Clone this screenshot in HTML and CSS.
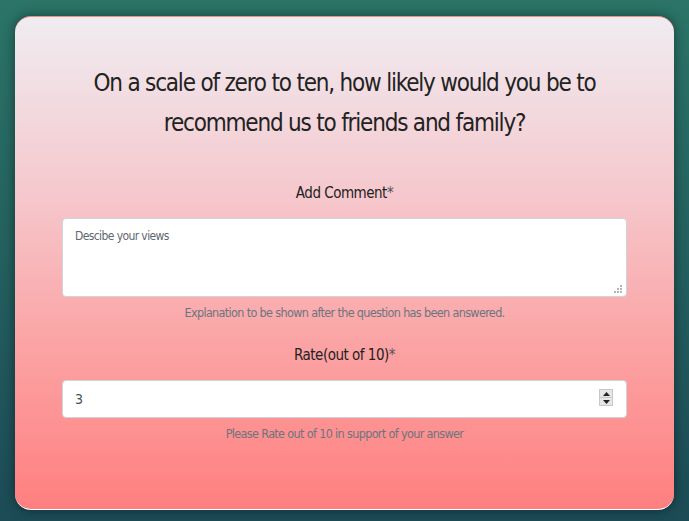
FILE: index.html
```html
<!DOCTYPE html>
<html lang="en">
<head>
<meta charset="utf-8">
<title>Survey</title>
<link rel="stylesheet" href="styles.css">
</head>
<body>
<main class="page">
  <form class="card">
    <h1 class="question">On a scale of zero to ten, how likely would you be to recommend us to friends and family?</h1>
    <div class="field">
      <label class="label" for="comment">Add Comment<span class="req">*</span></label>
      <div class="control">
        <textarea id="comment" class="textarea" placeholder="Descibe your views"></textarea>
        <svg class="grip" width="9" height="9" viewBox="0 0 9 9" aria-hidden="true">
          <rect x="6" y="0" width="2" height="2" fill="#b5b5b5"/>
          <rect x="3" y="3" width="2" height="2" fill="#b5b5b5"/>
          <rect x="6" y="3" width="2" height="2" fill="#b5b5b5"/>
          <rect x="0" y="6" width="2" height="2" fill="#b5b5b5"/>
          <rect x="3" y="6" width="2" height="2" fill="#b5b5b5"/>
          <rect x="6" y="6" width="2" height="2" fill="#b5b5b5"/>
        </svg>
      </div>
      <p class="help">Explanation to be shown after the question has been answered.</p>
    </div>
    <div class="field">
      <label class="label" for="rate">Rate(out of 10)<span class="req">*</span></label>
      <div class="control">
        <input id="rate" class="input" type="number" value="3" min="0" max="10">
        <span class="spinner" aria-hidden="true">
          <span class="spin-btn"><svg width="7" height="4" viewBox="0 0 7 4"><path d="M0 4 L3.5 0 L7 4 Z" fill="#222"/></svg></span>
          <span class="spin-btn"><svg width="7" height="4" viewBox="0 0 7 4"><path d="M0 0 L7 0 L3.5 4 Z" fill="#222"/></svg></span>
        </span>
      </div>
      <p class="help">Please Rate out of 10 in support of your answer</p>
    </div>
  </form>
</main>
</body>
</html>
```

FILE: styles.css
```css
html, body {
  margin: 0;
  padding: 0;
  height: 100%;
}
body {
  background: linear-gradient(180deg, #2b7467 0%, #1c4b56 100%);
  font-family: "DejaVu Sans Condensed", "DejaVu Sans", sans-serif;
}
.page {
  padding: 16px 15px 12px 15px;
  box-sizing: border-box;
  height: 100%;
}
.card {
  box-sizing: border-box;
  height: 494px;
  border-radius: 16px;
  background: linear-gradient(180deg, #efecf1 0%, #f5c9ce 35%, #fba5a6 65%, #ff7f7f 100%);
  border-top: 1px solid #f28a86;
  border-bottom: 1px solid #ffffff;
  box-shadow: 0 0 12px rgba(0, 0, 0, 0.45);
  padding: 46px 47px 20px 47px;
  display: flex;
  flex-direction: column;
}
.question {
  margin: 0 0 38px 0;
  font-size: 24px;
  line-height: 40px;
  letter-spacing: -1.2px;
  font-weight: normal;
  color: #222;
  text-align: center;
  padding: 0 20px;
}
.field {
  display: flex;
  flex-direction: column;
  align-items: stretch;
  margin-bottom: 20px;
}
.label {
  text-align: center;
  font-size: 15px;
  line-height: 24px;
  letter-spacing: -0.5px;
  color: #222;
  margin-bottom: 13px;
}
.req {
  color: #555;
  font-weight: normal;
}
.control {
  position: relative;
}
.textarea, .input {
  display: block;
  box-sizing: border-box;
  width: 100%;
  margin: 0;
  background: #fff;
  border: 1px solid #ced4da;
  border-radius: 4px;
  font-family: inherit;
  color: #495057;
  outline: none;
}
.textarea {
  height: 79px;
  padding: 10px 12px;
  font-size: 12px;
  letter-spacing: -0.6px;
  resize: none;
}
.textarea::placeholder {
  color: #5f6670;
}
.grip {
  position: absolute;
  right: 4px;
  bottom: 3px;
}
.input {
  height: 38px;
  padding: 6px 12px;
  font-size: 14px;
  appearance: textfield;
  -moz-appearance: textfield;
}
.input::-webkit-inner-spin-button,
.input::-webkit-outer-spin-button {
  -webkit-appearance: none;
  margin: 0;
}
.spinner {
  position: absolute;
  right: 14px;
  top: 9px;
  width: 14px;
  height: 17px;
  display: flex;
  flex-direction: column;
  border: 1px solid #c8c8c8;
  background: #e6e6e6;
  box-sizing: border-box;
}
.spin-btn {
  flex: 1;
  display: flex;
  align-items: center;
  justify-content: center;
}
.spin-btn + .spin-btn {
  border-top: 1px solid #c8c8c8;
}
.help {
  margin: 6px 0 0 0;
  text-align: center;
  font-size: 12.5px;
  line-height: 20px;
  letter-spacing: -0.65px;
  color: #6c757d;
}
```
